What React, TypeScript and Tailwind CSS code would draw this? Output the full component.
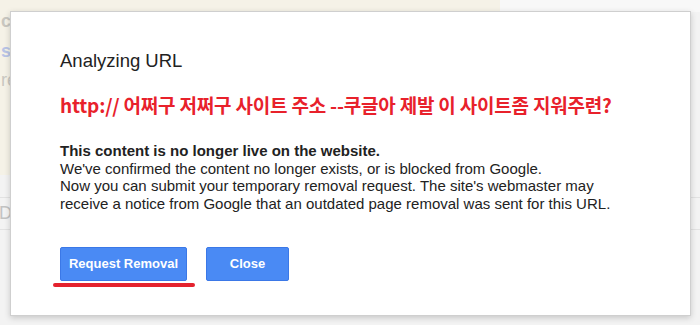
export default function App() {
  return (
    <div className="relative h-[325px] w-[700px] overflow-hidden bg-[#f3f3f3] font-['Liberation_Sans',Arial,sans-serif]">
      {/* faded page behind the dialog */}
      <div className="flex h-[175px] w-[500px] flex-col bg-[#f5f2e7] pl-[1px] pt-[12px] text-[18px] leading-none">
        <span className="font-bold text-[#c9c7c0]">c</span>
        <span className="mt-[12px] font-bold text-[#b9c4e6]">su</span>
        <span className="mt-[11px] text-[#c9c7c0]">re</span>
      </div>
      <div className="mt-[22px] flex h-[33px] items-center border-y border-[#e2e2e2] text-[18px] text-[#c3c3c3]">
        <span className="-ml-[1px]">Do</span>
      </div>
      <div className="absolute right-0 top-0 h-[12px] w-[200px] bg-[#f8f8f8]" />

      <div className="absolute left-[10px] top-[11px] flex h-[305px] w-[681px] flex-col border border-[#cfcfcf] bg-white pl-[49px] shadow-[0_2px_6px_rgba(0,0,0,0.18)]">
        <h1 className="mt-[37px] text-[18.5px] leading-[24px] text-[#222]">Analyzing URL</h1>
        <p className="mt-[19px] font-['Noto_Sans_CJK_KR','Liberation_Sans',sans-serif] text-[19px] font-bold leading-[26px] tracking-[-0.2px] text-[#e8212b]">
          http:// 어쩌구 저쩌구 사이트 주소 --쿠글아 제발 이 사이트좀 지워주련?
        </p>
        <div className="mt-[24px] text-[15px] leading-[17.5px] text-[#222]">
          <p className="font-bold">This content is no longer live on the website.</p>
          <p>We've confirmed the content no longer exists, or is blocked from Google.</p>
          <p>
            Now you can submit your temporary removal request. The site's webmaster may
            <br />
            receive a notice from Google that an outdated page removal was sent for this URL.
          </p>
        </div>
        <div className="mt-[35px] flex gap-[19px]">
          <div className="relative">
            <button className="h-[34px] w-[127px] rounded-[2px] border border-[#3b78e7] bg-[#4a8af4] text-[13px] font-bold text-white">
              Request Removal
            </button>
            <div className="absolute -left-[7px] top-[36px] h-[4px] w-[142px] rounded-full bg-[#e4222e]" />
          </div>
          <button className="h-[34px] w-[83px] rounded-[2px] border border-[#3b78e7] bg-[#4a8af4] text-[13px] font-bold text-white">
            Close
          </button>
        </div>
      </div>
    </div>
  );
}
